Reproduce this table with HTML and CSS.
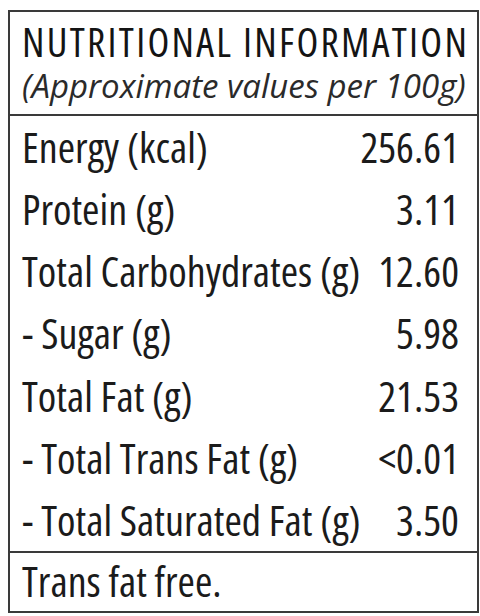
FILE: index.html
```html
<!DOCTYPE html>
<html lang="en">
<head>
<meta charset="utf-8">
<title>Nutritional Information</title>
<link rel="stylesheet" href="styles.css">
</head>
<body>
<section class="panel">
  <header class="panel-head">
    <h1 class="title">NUTRITIONAL INFORMATION</h1>
    <p class="subtitle">(Approximate values per 100g)</p>
  </header>
  <div class="rows">
    <div class="row"><span class="label">Energy (kcal)</span><span class="value">256.61</span></div>
    <div class="row"><span class="label">Protein (g)</span><span class="value">3.11</span></div>
    <div class="row"><span class="label">Total Carbohydrates (g)</span><span class="value">12.60</span></div>
    <div class="row"><span class="label">- Sugar (g)</span><span class="value">5.98</span></div>
    <div class="row"><span class="label">Total Fat (g)</span><span class="value">21.53</span></div>
    <div class="row"><span class="label">- Total Trans Fat (g)</span><span class="value">&lt;0.01</span></div>
    <div class="row"><span class="label">- Total Saturated Fat (g)</span><span class="value">3.50</span></div>
  </div>
  <footer class="panel-foot">Trans fat free.</footer>
</section>
</body>
</html>
```
FILE: styles.css
```css
html, body {
  margin: 0;
  padding: 0;
  background: #ffffff;
}
body {
  padding: 10px 1px 3px 8px;
  font-family: "Open Sans", "Noto Sans", sans-serif;
  font-stretch: 75%;
  color: #1b1b1b;
}
.panel {
  box-sizing: border-box;
  width: 471px;
  height: 603px;
  border: 2px solid #3a3a3a;
  display: flex;
  flex-direction: column;
}
.panel-head {
  box-sizing: border-box;
  height: 104px;
  padding: 8px 0 0 12px;
  border-bottom: 2px solid #3a3a3a;
}
.title {
  margin: 0;
  font-size: 40px;
  font-weight: 500;
  letter-spacing: 2.3px;
  line-height: 44px;
  white-space: nowrap;
  color: #141414;
}
.subtitle {
  margin: 0;
  font-size: 33px;
  font-style: italic;
  font-stretch: 100%;
  line-height: 44px;
  white-space: nowrap;
  color: #2a2a2a;
}
.rows {
  flex: 1;
  display: flex;
  flex-direction: column;
  border-bottom: 2px solid #3a3a3a;
}
.row {
  flex: 1;
  display: flex;
  justify-content: space-between;
  align-items: center;
  padding: 0 18px 0 12px;
  font-size: 42px;
  line-height: 50px;
  white-space: nowrap;
}
.panel-foot {
  box-sizing: border-box;
  height: 58px;
  padding: 0 12px;
  font-size: 42px;
  line-height: 56px;
}
```
